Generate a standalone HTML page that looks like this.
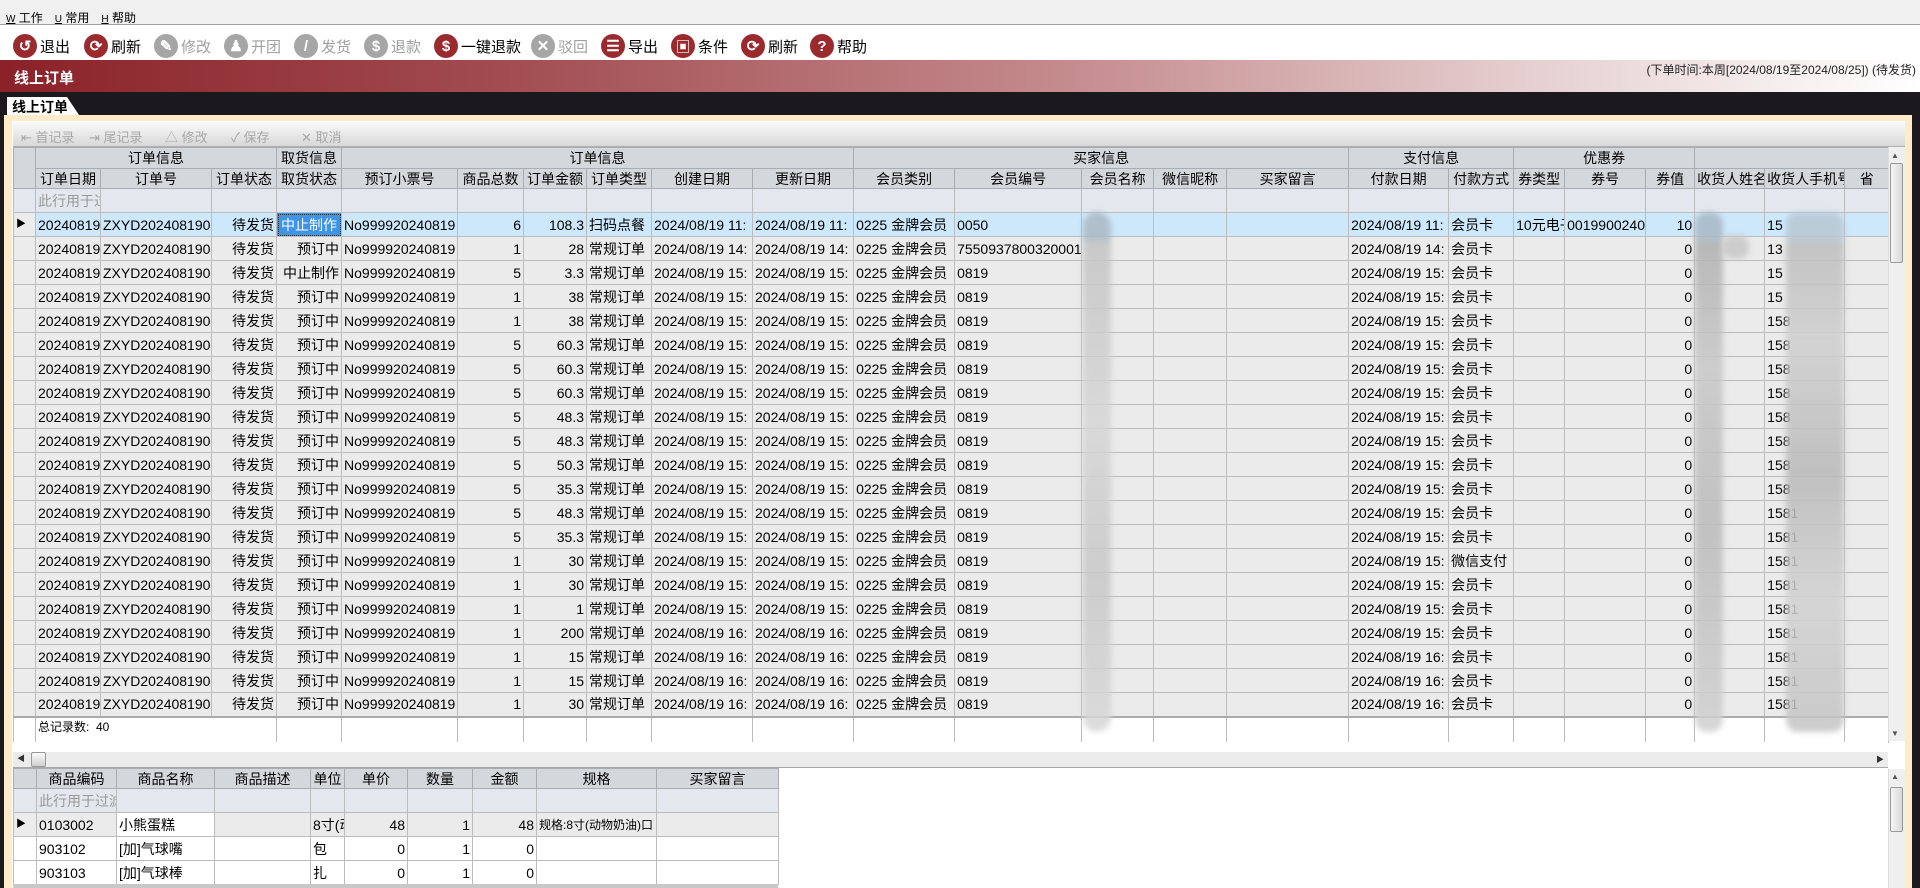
<!DOCTYPE html>
<html><head><meta charset="utf-8">
<style>
*{box-sizing:border-box;margin:0;padding:0}
body{width:1920px;height:888px;overflow:hidden;background:#fff;font-family:"Liberation Sans","Noto Sans CJK SC",sans-serif;font-size:14px;color:#000;position:relative}
.abs{position:absolute}
#menu{left:0;top:0;width:1920px;height:25px;background:#f0f0f0;border-bottom:1px solid #a0a0a0;font-size:12px;padding:9px 0 0 6px}
#menu span{margin-right:12px}
#menu u{font-size:10px}
#tb{left:0;top:26px;width:1920px;height:34px;background:#fff}
.tbi{position:absolute;top:8px;height:24px;display:flex;align-items:center;font-size:15px;white-space:nowrap}
.ic{width:24px;height:24px;border-radius:50%;background:#9b2a2e;margin-right:3px;display:flex;align-items:center;justify-content:center;color:#fff;font-weight:bold;font-size:15px}
.dis .ic{background:#a6a6a6}.dis{color:#a0a0a0}
#red{left:0;top:60px;width:1920px;height:32px;background:linear-gradient(90deg,#8a2228 0%,#a04a4f 25%,#c48a8c 55%,#e6d0d1 80%,#fff 100%)}
#black{left:0;top:92px;width:1920px;height:796px;background:#1b191e}
#cream{left:4px;top:115px;width:1908px;height:773px;background:#fdebc9}
#tab{left:7px;top:97px;width:60px;height:18px;background:#fff;font-weight:bold;font-size:14px;padding:0 0 0 5px;white-space:nowrap}
#tab:after{content:"";position:absolute;right:-12px;top:0;border-left:12px solid #fff;border-top:18px solid transparent}
#pane{left:12px;top:121px;width:1893px;height:767px;background:#fff}
#nav{left:13px;top:122px;width:1892px;height:25px;background:linear-gradient(#fafafa,#d8d8d8);border-bottom:1px solid #b0b0b0;color:#a8a8a8;font-size:13px}
#nav span{position:absolute;top:5px;white-space:nowrap}
table{border-collapse:collapse;table-layout:fixed;position:absolute}
td{border:1px solid #bcbcbc;white-space:nowrap;overflow:hidden;padding:0 2px;height:24px;line-height:22px}
.hd td{background:#d4d7dc;text-align:center;border-color:#a9acb1}
tr.h1 td{height:21px;line-height:19px}
tr.h2 td{height:20px;line-height:18px}
.fl td{background:#e4e8ee;color:#999}
.dr td{background:#ebebeb}
.dr td.r,.r{text-align:right}
.sel td{background:#cde8fb}
td.ind{background:#ececec}
td.hl{background:#3e94e6!important;color:#fff;outline:1px dotted #333;outline-offset:-2px;text-align:center}
.tot td{background:#fff;height:26px;line-height:18px;font-size:12px;vertical-align:top;border-top:2px solid #aaa}
.blur{position:absolute;filter:blur(3px);opacity:.85}
</style></head><body>
<div id="menu" class="abs"><span><u>W</u> 工作</span><span><u>U</u> 常用</span><span><u>H</u> 帮助</span></div>
<div id="tb" class="abs">
<div class="tbi" style="left:13px"><div class="ic">↺</div>退出</div>
<div class="tbi" style="left:84px"><div class="ic">⟳</div>刷新</div>
<div class="tbi dis" style="left:154px"><div class="ic">✎</div>修改</div>
<div class="tbi dis" style="left:224px"><div class="ic">♟</div>开团</div>
<div class="tbi dis" style="left:294px"><div class="ic">/</div>发货</div>
<div class="tbi dis" style="left:364px"><div class="ic">$</div>退款</div>
<div class="tbi" style="left:434px"><div class="ic">$</div>一键退款</div>
<div class="tbi dis" style="left:531px"><div class="ic">✕</div>驳回</div>
<div class="tbi" style="left:601px"><div class="ic">☰</div>导出</div>
<div class="tbi" style="left:671px"><div class="ic">▣</div>条件</div>
<div class="tbi" style="left:741px"><div class="ic">⟳</div>刷新</div>
<div class="tbi" style="left:810px"><div class="ic">?</div>帮助</div>
</div>
<div id="red" class="abs"><span class="abs" style="left:14px;top:7px;color:#fff;font-weight:bold;font-size:15px">线上订单</span><span class="abs" style="right:4px;top:1px;font-size:12px;color:#222">(下单时间:本周[2024/08/19至2024/08/25]) (待发货)</span></div>
<div id="black" class="abs"></div>
<div id="cream" class="abs"></div>
<div id="tab" class="abs">线上订单</div>
<div id="pane" class="abs"></div>
<div id="nav" class="abs"><span style="left:8px">⇤ 首记录</span><span style="left:76px">⇥ 尾记录</span><span style="left:152px">△ 修改</span><span style="left:218px">✓ 保存</span><span style="left:288px">✕ 取消</span></div>

<table style="left:13px;top:147px;width:1875px">
<colgroup><col style="width:22px"><col style="width:65px"><col style="width:111px"><col style="width:65px"><col style="width:65px"><col style="width:116px"><col style="width:66px"><col style="width:63px"><col style="width:65px"><col style="width:101px"><col style="width:101px"><col style="width:101px"><col style="width:127px"><col style="width:72px"><col style="width:73px"><col style="width:122px"><col style="width:100px"><col style="width:65px"><col style="width:51px"><col style="width:81px"><col style="width:49px"><col style="width:70px"><col style="width:80px"><col style="width:44px"></colgroup>
<tr class="hd h1"><td rowspan="2"></td><td colspan="3">订单信息</td><td>取货信息</td><td colspan="6">订单信息</td><td colspan="5">买家信息</td><td colspan="2">支付信息</td><td colspan="3">优惠券</td><td colspan="3"></td></tr>
<tr class="hd h2"><td>订单日期</td><td>订单号</td><td>订单状态</td><td>取货状态</td><td>预订小票号</td><td>商品总数</td><td>订单金额</td><td>订单类型</td><td>创建日期</td><td>更新日期</td><td>会员类别</td><td>会员编号</td><td>会员名称</td><td>微信昵称</td><td>买家留言</td><td>付款日期</td><td>付款方式</td><td>券类型</td><td>券号</td><td>券值</td><td>收货人姓名</td><td>收货人手机号</td><td>省</td></tr>
<tr class="fl"><td></td><td>此行用于过滤</td><td></td><td></td><td></td><td></td><td></td><td></td><td></td><td></td><td></td><td></td><td></td><td></td><td></td><td></td><td></td><td></td><td></td><td></td><td></td><td></td><td></td><td></td></tr>
<tr class="dr sel"><td class="ind" style="font-size:10px">▶</td><td>20240819</td><td>ZXYD2024081900</td><td class="r">待发货</td><td class="hl">中止制作</td><td>No999920240819</td><td class="r">6</td><td class="r">108.3</td><td>扫码点餐</td><td>2024/08/19 11:</td><td>2024/08/19 11:</td><td>0225 金牌会员</td><td>0050</td><td></td><td></td><td></td><td>2024/08/19 11:</td><td>会员卡</td><td>10元电子</td><td>0019900240</td><td class="r">10</td><td></td><td>15</td><td></td></tr>
<tr class="dr"><td class="ind"></td><td>20240819</td><td>ZXYD2024081900</td><td class="r">待发货</td><td class="r">预订中</td><td>No999920240819</td><td class="r">1</td><td class="r">28</td><td>常规订单</td><td>2024/08/19 14:</td><td>2024/08/19 14:</td><td>0225 金牌会员</td><td>7550937800320001</td><td></td><td></td><td></td><td>2024/08/19 14:</td><td>会员卡</td><td></td><td></td><td class="r">0</td><td></td><td>13</td><td></td></tr>
<tr class="dr"><td class="ind"></td><td>20240819</td><td>ZXYD2024081900</td><td class="r">待发货</td><td class="r">中止制作</td><td>No999920240819</td><td class="r">5</td><td class="r">3.3</td><td>常规订单</td><td>2024/08/19 15:</td><td>2024/08/19 15:</td><td>0225 金牌会员</td><td>0819</td><td></td><td></td><td></td><td>2024/08/19 15:</td><td>会员卡</td><td></td><td></td><td class="r">0</td><td></td><td>15</td><td></td></tr>
<tr class="dr"><td class="ind"></td><td>20240819</td><td>ZXYD2024081900</td><td class="r">待发货</td><td class="r">预订中</td><td>No999920240819</td><td class="r">1</td><td class="r">38</td><td>常规订单</td><td>2024/08/19 15:</td><td>2024/08/19 15:</td><td>0225 金牌会员</td><td>0819</td><td></td><td></td><td></td><td>2024/08/19 15:</td><td>会员卡</td><td></td><td></td><td class="r">0</td><td></td><td>15</td><td></td></tr>
<tr class="dr"><td class="ind"></td><td>20240819</td><td>ZXYD2024081900</td><td class="r">待发货</td><td class="r">预订中</td><td>No999920240819</td><td class="r">1</td><td class="r">38</td><td>常规订单</td><td>2024/08/19 15:</td><td>2024/08/19 15:</td><td>0225 金牌会员</td><td>0819</td><td></td><td></td><td></td><td>2024/08/19 15:</td><td>会员卡</td><td></td><td></td><td class="r">0</td><td></td><td>158</td><td></td></tr>
<tr class="dr"><td class="ind"></td><td>20240819</td><td>ZXYD2024081900</td><td class="r">待发货</td><td class="r">预订中</td><td>No999920240819</td><td class="r">5</td><td class="r">60.3</td><td>常规订单</td><td>2024/08/19 15:</td><td>2024/08/19 15:</td><td>0225 金牌会员</td><td>0819</td><td></td><td></td><td></td><td>2024/08/19 15:</td><td>会员卡</td><td></td><td></td><td class="r">0</td><td></td><td>158</td><td></td></tr>
<tr class="dr"><td class="ind"></td><td>20240819</td><td>ZXYD2024081900</td><td class="r">待发货</td><td class="r">预订中</td><td>No999920240819</td><td class="r">5</td><td class="r">60.3</td><td>常规订单</td><td>2024/08/19 15:</td><td>2024/08/19 15:</td><td>0225 金牌会员</td><td>0819</td><td></td><td></td><td></td><td>2024/08/19 15:</td><td>会员卡</td><td></td><td></td><td class="r">0</td><td></td><td>158</td><td></td></tr>
<tr class="dr"><td class="ind"></td><td>20240819</td><td>ZXYD2024081900</td><td class="r">待发货</td><td class="r">预订中</td><td>No999920240819</td><td class="r">5</td><td class="r">60.3</td><td>常规订单</td><td>2024/08/19 15:</td><td>2024/08/19 15:</td><td>0225 金牌会员</td><td>0819</td><td></td><td></td><td></td><td>2024/08/19 15:</td><td>会员卡</td><td></td><td></td><td class="r">0</td><td></td><td>158</td><td></td></tr>
<tr class="dr"><td class="ind"></td><td>20240819</td><td>ZXYD2024081900</td><td class="r">待发货</td><td class="r">预订中</td><td>No999920240819</td><td class="r">5</td><td class="r">48.3</td><td>常规订单</td><td>2024/08/19 15:</td><td>2024/08/19 15:</td><td>0225 金牌会员</td><td>0819</td><td></td><td></td><td></td><td>2024/08/19 15:</td><td>会员卡</td><td></td><td></td><td class="r">0</td><td></td><td>158</td><td></td></tr>
<tr class="dr"><td class="ind"></td><td>20240819</td><td>ZXYD2024081900</td><td class="r">待发货</td><td class="r">预订中</td><td>No999920240819</td><td class="r">5</td><td class="r">48.3</td><td>常规订单</td><td>2024/08/19 15:</td><td>2024/08/19 15:</td><td>0225 金牌会员</td><td>0819</td><td></td><td></td><td></td><td>2024/08/19 15:</td><td>会员卡</td><td></td><td></td><td class="r">0</td><td></td><td>158</td><td></td></tr>
<tr class="dr"><td class="ind"></td><td>20240819</td><td>ZXYD2024081900</td><td class="r">待发货</td><td class="r">预订中</td><td>No999920240819</td><td class="r">5</td><td class="r">50.3</td><td>常规订单</td><td>2024/08/19 15:</td><td>2024/08/19 15:</td><td>0225 金牌会员</td><td>0819</td><td></td><td></td><td></td><td>2024/08/19 15:</td><td>会员卡</td><td></td><td></td><td class="r">0</td><td></td><td>158</td><td></td></tr>
<tr class="dr"><td class="ind"></td><td>20240819</td><td>ZXYD2024081900</td><td class="r">待发货</td><td class="r">预订中</td><td>No999920240819</td><td class="r">5</td><td class="r">35.3</td><td>常规订单</td><td>2024/08/19 15:</td><td>2024/08/19 15:</td><td>0225 金牌会员</td><td>0819</td><td></td><td></td><td></td><td>2024/08/19 15:</td><td>会员卡</td><td></td><td></td><td class="r">0</td><td></td><td>158</td><td></td></tr>
<tr class="dr"><td class="ind"></td><td>20240819</td><td>ZXYD2024081900</td><td class="r">待发货</td><td class="r">预订中</td><td>No999920240819</td><td class="r">5</td><td class="r">48.3</td><td>常规订单</td><td>2024/08/19 15:</td><td>2024/08/19 15:</td><td>0225 金牌会员</td><td>0819</td><td></td><td></td><td></td><td>2024/08/19 15:</td><td>会员卡</td><td></td><td></td><td class="r">0</td><td></td><td>1581</td><td></td></tr>
<tr class="dr"><td class="ind"></td><td>20240819</td><td>ZXYD2024081900</td><td class="r">待发货</td><td class="r">预订中</td><td>No999920240819</td><td class="r">5</td><td class="r">35.3</td><td>常规订单</td><td>2024/08/19 15:</td><td>2024/08/19 15:</td><td>0225 金牌会员</td><td>0819</td><td></td><td></td><td></td><td>2024/08/19 15:</td><td>会员卡</td><td></td><td></td><td class="r">0</td><td></td><td>1581</td><td></td></tr>
<tr class="dr"><td class="ind"></td><td>20240819</td><td>ZXYD2024081900</td><td class="r">待发货</td><td class="r">预订中</td><td>No999920240819</td><td class="r">1</td><td class="r">30</td><td>常规订单</td><td>2024/08/19 15:</td><td>2024/08/19 15:</td><td>0225 金牌会员</td><td>0819</td><td></td><td></td><td></td><td>2024/08/19 15:</td><td>微信支付</td><td></td><td></td><td class="r">0</td><td></td><td>1581</td><td></td></tr>
<tr class="dr"><td class="ind"></td><td>20240819</td><td>ZXYD2024081900</td><td class="r">待发货</td><td class="r">预订中</td><td>No999920240819</td><td class="r">1</td><td class="r">30</td><td>常规订单</td><td>2024/08/19 15:</td><td>2024/08/19 15:</td><td>0225 金牌会员</td><td>0819</td><td></td><td></td><td></td><td>2024/08/19 15:</td><td>会员卡</td><td></td><td></td><td class="r">0</td><td></td><td>1581</td><td></td></tr>
<tr class="dr"><td class="ind"></td><td>20240819</td><td>ZXYD2024081900</td><td class="r">待发货</td><td class="r">预订中</td><td>No999920240819</td><td class="r">1</td><td class="r">1</td><td>常规订单</td><td>2024/08/19 15:</td><td>2024/08/19 15:</td><td>0225 金牌会员</td><td>0819</td><td></td><td></td><td></td><td>2024/08/19 15:</td><td>会员卡</td><td></td><td></td><td class="r">0</td><td></td><td>1581</td><td></td></tr>
<tr class="dr"><td class="ind"></td><td>20240819</td><td>ZXYD2024081900</td><td class="r">待发货</td><td class="r">预订中</td><td>No999920240819</td><td class="r">1</td><td class="r">200</td><td>常规订单</td><td>2024/08/19 16:</td><td>2024/08/19 16:</td><td>0225 金牌会员</td><td>0819</td><td></td><td></td><td></td><td>2024/08/19 15:</td><td>会员卡</td><td></td><td></td><td class="r">0</td><td></td><td>1581</td><td></td></tr>
<tr class="dr"><td class="ind"></td><td>20240819</td><td>ZXYD2024081900</td><td class="r">待发货</td><td class="r">预订中</td><td>No999920240819</td><td class="r">1</td><td class="r">15</td><td>常规订单</td><td>2024/08/19 16:</td><td>2024/08/19 16:</td><td>0225 金牌会员</td><td>0819</td><td></td><td></td><td></td><td>2024/08/19 16:</td><td>会员卡</td><td></td><td></td><td class="r">0</td><td></td><td>1581</td><td></td></tr>
<tr class="dr"><td class="ind"></td><td>20240819</td><td>ZXYD2024081900</td><td class="r">待发货</td><td class="r">预订中</td><td>No999920240819</td><td class="r">1</td><td class="r">15</td><td>常规订单</td><td>2024/08/19 16:</td><td>2024/08/19 16:</td><td>0225 金牌会员</td><td>0819</td><td></td><td></td><td></td><td>2024/08/19 16:</td><td>会员卡</td><td></td><td></td><td class="r">0</td><td></td><td>1581</td><td></td></tr>
<tr class="dr"><td class="ind"></td><td>20240819</td><td>ZXYD2024081900</td><td class="r">待发货</td><td class="r">预订中</td><td>No999920240819</td><td class="r">1</td><td class="r">30</td><td>常规订单</td><td>2024/08/19 16:</td><td>2024/08/19 16:</td><td>0225 金牌会员</td><td>0819</td><td></td><td></td><td></td><td>2024/08/19 16:</td><td>会员卡</td><td></td><td></td><td class="r">0</td><td></td><td>1581</td><td></td></tr>
<tr class="tot"><td></td><td colspan="2" style="border-right-color:#fff">总记录数:&nbsp;&nbsp;40</td><td></td><td></td><td></td><td></td><td></td><td></td><td></td><td></td><td></td><td></td><td></td><td></td><td></td><td></td><td></td><td></td><td></td><td></td><td></td><td></td><td></td></tr>
</table>

<div class="blur" style="left:1083px;top:212px;width:28px;height:520px;background:linear-gradient(#aab8c4 0 5%,#c4c4c4 6%,#d6d6d6 40%,#c8c8c8 70%,#d8d8d8 100%);border-radius:14px"></div>
<div class="blur" style="left:1695px;top:212px;width:28px;height:520px;background:linear-gradient(#a8b8c6 0 5%,#b0b0b0 6%,#c8c8c8 30%,#bbbbbb 60%,#d0d0d0 100%);border-radius:12px"></div>
<div class="blur" style="left:1723px;top:235px;width:26px;height:24px;background:#c8c8c8;border-radius:10px"></div>
<div class="blur" style="left:1786px;top:212px;width:58px;height:520px;background:linear-gradient(#b8c8d4 0 5%,#bdbdbd 6%,#cfcfcf 25%,#b9b9b9 50%,#d2d2d2 75%,#c4c4c4 100%);border-radius:12px"></div>

<div class="abs" style="left:1888px;top:147px;width:17px;height:594px;background:#efefef;border-left:1px solid #ddd"></div>
<div class="abs" style="left:1891px;top:151px;font-size:8px;color:#555">▲</div>
<div class="abs" style="left:1890px;top:163px;width:13px;height:100px;background:linear-gradient(90deg,#f5f5f5,#d9d9d9);border:1px solid #999;border-radius:2px"></div>
<div class="abs" style="left:1891px;top:729px;font-size:8px;color:#555">▼</div>
<div class="abs" style="left:13px;top:742px;width:1875px;height:10px;background:#fff"></div>
<div class="abs" style="left:13px;top:752px;width:1875px;height:16px;background:#ececec;border-bottom:1px solid #a8a8a8"></div>
<div class="abs" style="left:17px;top:753px;font-size:8px;color:#333">◀</div>
<div class="abs" style="left:31px;top:752px;width:15px;height:15px;background:linear-gradient(#fafafa,#d0d0d0);border:1px solid #999;border-radius:2px"></div>
<div class="abs" style="left:1876px;top:754px;font-size:8px;color:#333">▶</div>
<div class="abs" style="left:1888px;top:769px;width:17px;height:119px;background:#efefef;border-left:1px solid #ddd"></div>
<div class="abs" style="left:1891px;top:772px;font-size:8px;color:#555">▲</div>
<div class="abs" style="left:1890px;top:787px;width:13px;height:45px;background:linear-gradient(90deg,#f5f5f5,#d9d9d9);border:1px solid #999;border-radius:2px"></div>

<table style="left:13px;top:768px;width:765px">
<colgroup><col style="width:23px"><col style="width:80px"><col style="width:98px"><col style="width:96px"><col style="width:34px"><col style="width:63px"><col style="width:65px"><col style="width:64px"><col style="width:120px"><col style="width:122px"></colgroup>
<tr class="hd h2"><td></td><td>商品编码</td><td>商品名称</td><td>商品描述</td><td>单位</td><td>单价</td><td>数量</td><td>金额</td><td>规格</td><td>买家留言</td></tr>
<tr class="fl"><td></td><td>此行用于过滤</td><td></td><td></td><td></td><td></td><td></td><td></td><td></td><td></td></tr>
<tr class="dr"><td class="ind" style="font-size:10px">▶</td><td>0103002</td><td style="background:#fff">小熊蛋糕</td><td></td><td>8寸(动</td><td class="r">48</td><td class="r">1</td><td class="r">48</td><td style="font-size:12px">规格:8寸(动物奶油)口</td><td></td></tr>
<tr><td></td><td>903102</td><td>[加]气球嘴</td><td></td><td>包</td><td class="r">0</td><td class="r">1</td><td class="r">0</td><td></td><td></td></tr>
<tr><td></td><td>903103</td><td>[加]气球棒</td><td></td><td>扎</td><td class="r">0</td><td class="r">1</td><td class="r">0</td><td></td><td></td></tr>
</table>
<div class="abs" style="left:13px;top:884px;width:765px;height:4px;background:#c8c8c8"></div>
</body></html>
